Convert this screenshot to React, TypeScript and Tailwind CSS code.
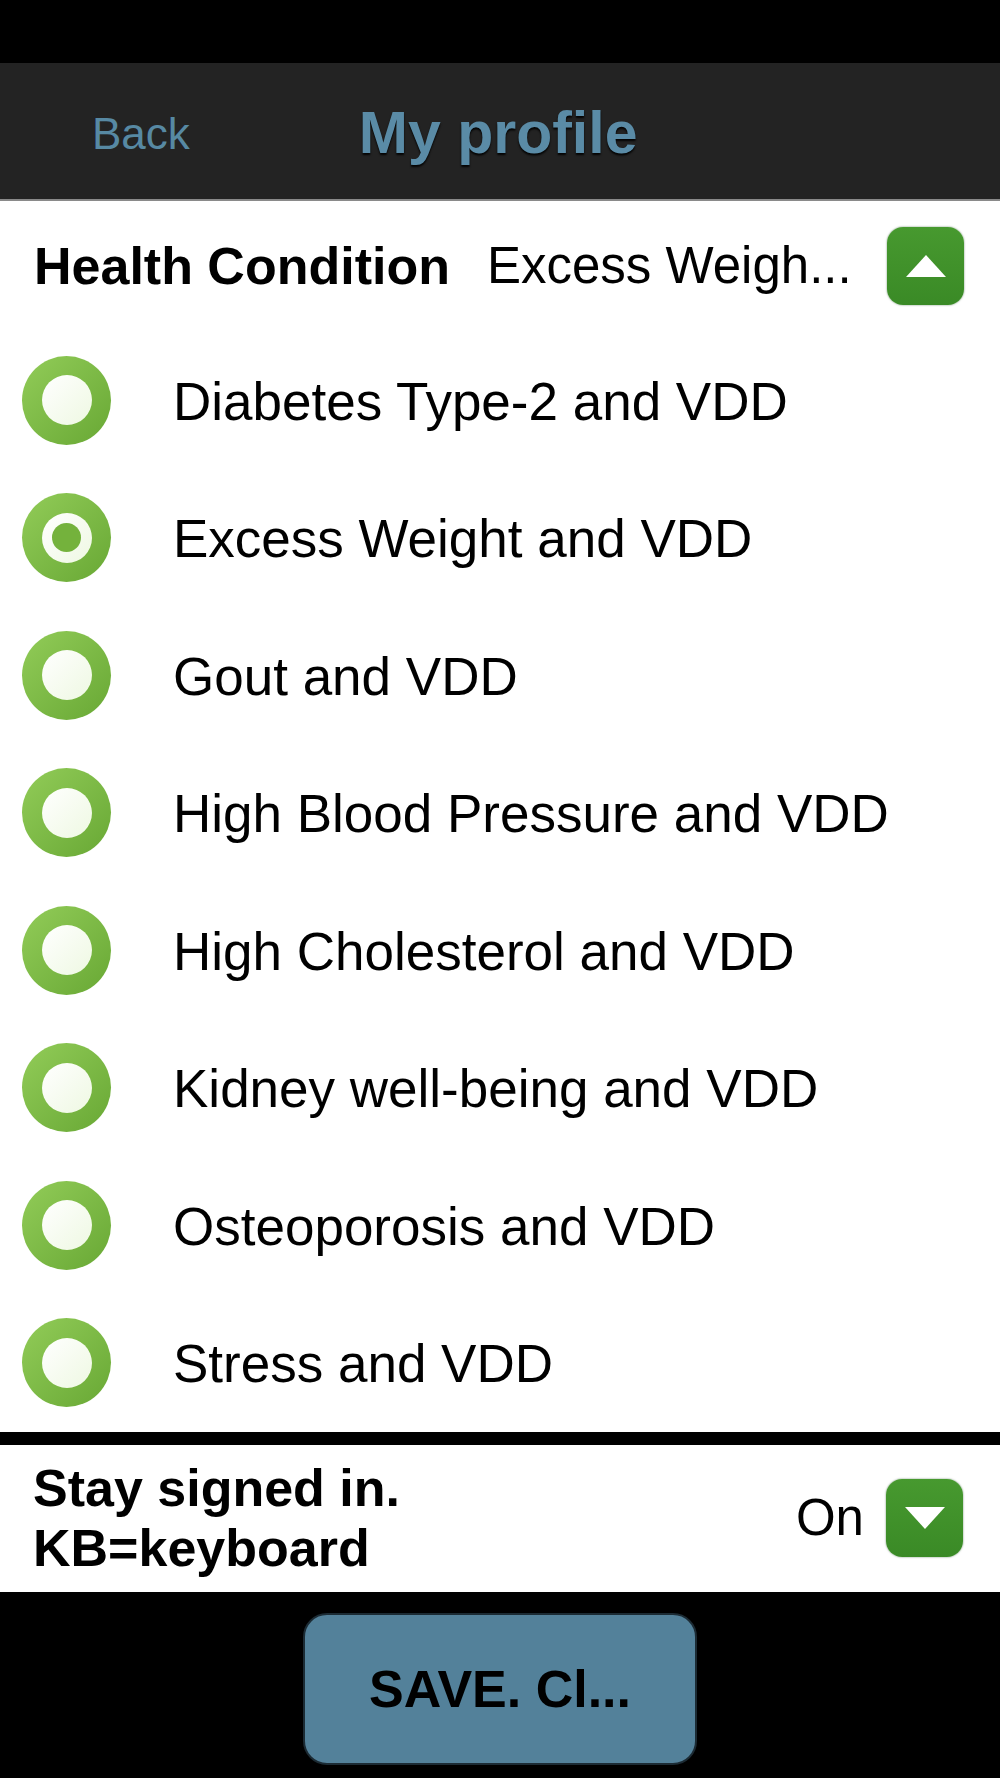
import React from "react";

const conditions = [
  "Diabetes Type-2 and VDD",
  "Excess Weight and VDD",
  "Gout and VDD",
  "High Blood Pressure and VDD",
  "High Cholesterol and VDD",
  "Kidney well-being and VDD",
  "Osteoporosis and VDD",
  "Stress and VDD",
];

function Radio({ checked }: { checked: boolean }) {
  return (
    <div className="flex h-[89px] w-[89px] shrink-0 items-center justify-center rounded-full bg-gradient-to-br from-[#92cc58] to-[#68a834]">
      <div className="flex h-[50px] w-[50px] items-center justify-center rounded-full bg-gradient-to-br from-[#ffffff] to-[#eef8e2]">
        {checked && <div className="h-[29px] w-[29px] rounded-full bg-[#74b23c]" />}
      </div>
    </div>
  );
}

function GreenToggle({ up }: { up: boolean }) {
  return (
    <div className="flex h-[78px] w-[77px] shrink-0 items-center justify-center rounded-[16px] bg-gradient-to-b from-[#47992f] to-[#3a8a26] shadow-[0_0_2px_rgba(0,60,0,0.6)]">
      <svg width="42" height="24" viewBox="0 0 42 24">
        {up ? <polygon points="21,1 41,23 1,23" fill="#fff" /> : <polygon points="1,1 41,1 21,23" fill="#fff" />}
      </svg>
    </div>
  );
}

export default function App() {
  const selected = 1;
  return (
    <div className="flex h-[1778px] w-[1000px] flex-col bg-black font-['Liberation_Sans',Arial,sans-serif] text-black">
      {/* Status bar */}
      <div className="h-[63px] bg-black" />

      {/* Nav bar */}
      <div className="flex h-[138px] items-center border-b-2 border-[#8a8a8a] bg-[#232323]">
        <span className="ml-[92px] pt-[6px] text-[44px] text-[#5789a3]">Back</span>
        <span className="ml-[169px] pt-[6px] text-[59px] font-bold text-[#5a8ba6] [text-shadow:0_2px_2px_rgba(0,0,0,0.9)]">
          My profile
        </span>
      </div>

      {/* Health condition */}
      <div className="flex flex-1 flex-col bg-white">
        <div className="flex h-[131px] items-center pl-[34px] pr-[36px]">
          <span className="text-[52px] font-bold">Health Condition</span>
          <span className="ml-[37px] flex-1 text-[51px]">Excess Weigh...</span>
          <GreenToggle up />
        </div>
        {conditions.map((c, i) => (
          <div key={c} className="flex h-[137.5px] items-center pl-[22px]">
            <Radio checked={i === selected} />
            <span className="ml-[62px] pt-[2px] text-[53px]">{c}</span>
          </div>
        ))}
      </div>

      <div className="h-[13px] bg-black" />

      {/* Stay signed in */}
      <div className="flex h-[148px] items-center bg-white pl-[33px] pr-[37px]">
        <div className="flex-1 text-[52px] font-bold leading-[60px]">
          <div>Stay signed in.</div>
          <div>KB=keyboard</div>
        </div>
        <span className="mr-[22px] text-[51px]">On</span>
        <GreenToggle up={false} />
      </div>

      {/* Save */}
      <div className="flex h-[186px] justify-center bg-black pt-[21px]">
        <button className="flex h-[152px] w-[394px] items-center justify-center rounded-[24px] border-2 border-[#1c2b34] bg-[#53819a] text-[52px] font-bold text-black">
          SAVE. Cl...
        </button>
      </div>
    </div>
  );
}
